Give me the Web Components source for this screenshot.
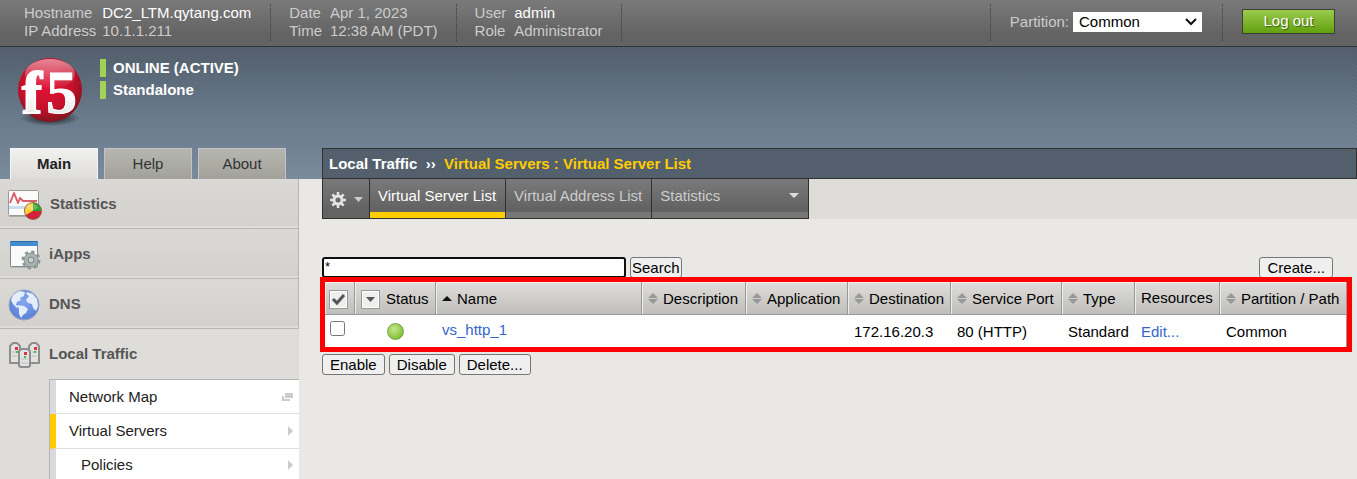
<!DOCTYPE html>
<html lang="en">
<head>
<meta charset="utf-8">
<meta name="viewport" content="width=device-width, initial-scale=1">
<title>BIG-IP - Virtual Server List</title>
<style>
  html, body { margin: 0; height: 100%; }
  body {
    font: 15px/18px "Liberation Sans", Arial, sans-serif;
    color: #000;
    background: #e9e8e5;
    --dark: #303030;
    --yellow: #fc0;
    --stripes: linear-gradient(135deg, rgba(0,0,0,.05) 25%, transparent 25% 50%, rgba(0,0,0,.05) 50% 75%, transparent 75%) 0 0 / 4px 4px;
    --bar: linear-gradient(#7a7a7a, #636363 75%);
  }
</style>
</head>
<body>
<bigip-app></bigip-app>
<script>
const define = (name, html, setup) => {
  const template = document.createElement('template');
  template.innerHTML = html;
  customElements.define(name, class extends HTMLElement {
    constructor() {
      super();
      this.attachShadow({ mode: 'open' }).append(template.content.cloneNode(true));
    }
    connectedCallback() { if (setup) setup(this, this.shadowRoot); }
  });
};

/* Push button used across forms */
define('form-button', `
  <style>
    :host { display: block; }
    button {
      display: block; box-sizing: border-box; height: 21px; margin: 0;
      padding: 0 var(--pad, 7px); font: inherit; line-height: 18px; color: #000;
      background: #efefef; border: 1px solid #767676; border-radius: 3px; white-space: nowrap;
    }
  </style>
  <button type="button"><slot></slot></button>`);

/* Label/value block in the top bar */
define('info-group', `
  <style>
    :host {
      display: grid; grid-template-columns: auto auto; column-gap: 8px; align-content: start;
      padding: 0 18px; border-right: 1px dotted #3c3c3c; color: #ccc; white-space: nowrap;
    }
    :host([first]) { padding: 0 19px 0 24px; column-gap: 6px; }
    ::slotted(b) { font-weight: normal; color: #fff; }
  </style>
  <slot></slot>`);

define('top-bar', `
  <style>
    :host {
      display: flex; justify-content: space-between; flex: none; padding: 4px 22px 5px 0;
      height: 37px; border-bottom: 1px solid #333; background: var(--bar);
    }
    .side { display: flex; }
    .partition, .out { display: flex; align-items: center; padding-bottom: 2px; }
    .partition { color: #ccc; padding: 0 20px 2px 19px; gap: 4px; border: 1px dotted #3c3c3c; border-width: 0 1px; }
    .out { padding-left: 19px; }
    select {
      appearance: none; box-sizing: border-box; width: 129px; height: 20px; margin: 0;
      padding: 0 6px; border: 0; border-radius: 0; color: #000; font: inherit;
      background: #fff url("data:image/svg+xml,%3Csvg xmlns='http://www.w3.org/2000/svg' width='12' height='8'%3E%3Cpath d='M1 1l5 5 5-5' fill='none' stroke='%23111' stroke-width='2'/%3E%3C/svg%3E") no-repeat right 5px center;
    }
    button {
      box-sizing: border-box; width: 93px; height: 25px; margin: 0; padding: 0 0 2px; font: inherit; color: #fff;
      text-shadow: 1px 1px 1px #3b5d10; border: 1px solid #3b3f36;
      background: linear-gradient(#9ccb4c, #62a010);
    }
  </style>
  <div class="side">
    <info-group first><span>Hostname</span><b>DC2_LTM.qytang.com</b><span>IP Address</span><span>10.1.1.211</span></info-group>
    <info-group><span>Date</span><span>Apr 1, 2023</span><span>Time</span><span>12:38 AM (PDT)</span></info-group>
    <info-group><span>User</span><b>admin</b><span>Role</span><span>Administrator</span></info-group>
  </div>
  <div class="side">
    <div class="partition">
      <label for="partition">Partition:</label>
      <select id="partition"><option>Common</option></select>
    </div>
    <div class="out"><button type="button">Log out</button></div>
  </div>`);

define('f5-logo', `
  <style>:host { display: block; } svg { display: block; overflow: visible; }</style>
  <svg width="72" height="72" viewBox="0 0 72 72" role="img" aria-label="f5">
    <defs>
      <radialGradient id="ball" cx="45%" cy="38%" r="62%">
        <stop offset="0" stop-color="#e3143a"/><stop offset=".65" stop-color="#c8102b"/><stop offset="1" stop-color="#84141f"/>
      </radialGradient>
      <linearGradient id="shine" x2="0" y2="1">
        <stop offset="0" stop-color="#fff" stop-opacity=".5"/><stop offset="1" stop-color="#fff" stop-opacity="0"/>
      </linearGradient>
      <linearGradient id="ink" x2="0" y2="1"><stop offset=".5" stop-color="#fff"/><stop offset="1" stop-color="#dcdcdc"/></linearGradient>
      <radialGradient id="shade"><stop offset=".4" stop-color="#222" stop-opacity=".7"/><stop offset="1" stop-color="#222" stop-opacity="0"/></radialGradient>
    </defs>
    <ellipse cx="36" cy="62" rx="30" ry="8" fill="url(#shade)"/>
    <circle cx="36" cy="34" r="32" fill="url(#ball)"/>
    <ellipse cx="36" cy="18" rx="25" ry="15" fill="url(#shine)"/>
    <g font-family="Liberation Serif, serif" font-weight="bold" fill="url(#ink)" stroke="#fff">
      <text x="8" y="57" font-size="60" stroke-width="2">f</text>
      <text x="32" y="57" font-size="62" stroke-width="1">5</text>
    </g>
  </svg>`);

define('device-status', `
  <style>
    :host { display: grid; gap: 4px; font-weight: bold; color: #fff; }
    ::slotted(span) { padding-left: 7px; border-left: 6px solid #a2d158; }
  </style>
  <slot></slot>`);

define('section-tab', `
  <style>
    :host { display: block; flex: none; }
    a {
      display: block; box-sizing: border-box; width: 88px; height: 31px; line-height: 30px; text-align: center;
      color: #333; text-decoration: none; background: linear-gradient(#b6b6b0, #a2a29b);
      border: 1px solid #c3c4bf; border-bottom: 0;
    }
    :host([active]) a { font-weight: bold; color: #222; background: linear-gradient(#f1f1ef, #dddcd8); border-color: #f5f5f3; }
  </style>
  <a href="#"><slot></slot></a>`);

define('page-banner', `
  <style>
    :host {
      display: block; flex: none;
      background: var(--stripes), linear-gradient(#54616e, #6b7c8e 50%, #7c8ea2);
    }
    .brand { display: flex; gap: 14px; height: 89px; padding: 12px 14px 0; }
    f5-logo { margin-top: -3px; }
    device-status { align-self: start; }
    .row { display: grid; grid-template-columns: 322px 1fr; }
    .tabs { display: flex; gap: 6px; padding-left: 10px; }
    nav.crumbs {
      box-sizing: border-box; height: 31px; padding-left: 6px; line-height: 30px; font-weight: bold;
      color: #fff; white-space: pre; border: 1px solid var(--dark);
      background: var(--stripes), #55626f;
    }
    nav.crumbs b { color: var(--yellow); }
  </style>
  <div class="brand">
    <f5-logo></f5-logo>
    <device-status><span>ONLINE (ACTIVE)</span><span>Standalone</span></device-status>
  </div>
  <div class="row">
    <nav class="tabs"><section-tab active>Main</section-tab><section-tab>Help</section-tab><section-tab>About</section-tab></nav>
    <nav class="crumbs">Local Traffic&nbsp; ››&nbsp; <b>Virtual Servers : Virtual Server List</b></nav>
  </div>`);

define('nav-section', `
  <style>
    :host { display: block; }
    a {
      display: flex; align-items: center; gap: 7px; box-sizing: border-box; height: 50px; padding-left: 7px;
      color: #555; font-weight: bold; text-decoration: none;
      background: linear-gradient(#dad9d6, #d2d1cd); border: solid #b7b7b7; border-width: 0 1px 1px 0;
      box-shadow: inset 0 -2px #deddda;
    }
    :host([open]) a { background: none; border-color: transparent; box-shadow: none; }
    ::slotted(svg) { display: block; flex: none; }
  </style>
  <a href="#"><slot name="icon"></slot><slot></slot></a>`);

define('nav-item', `
  <style>
    :host { display: block; }
    a {
      display: flex; align-items: center; justify-content: space-between; box-sizing: border-box; height: 34px;
      padding: 0 6px 0 13px; color: #222; text-decoration: none; background: #fff;
      border-left: 6px solid #dad9dd; border-bottom: 1px solid #ddd;
    }
    :host([active]) a { border-left-color: var(--yellow); }
    :host([tall]) a { height: 35px; }
    :host([nested]) a { padding-left: 25px; height: 32px; }
    svg { display: none; fill: #ccc; }
    :host(:not([external])) .arrow, :host([external]) .window { display: block; }
  </style>
  <a href="#"><slot></slot>
    <svg class="arrow" width="6" height="10"><path d="M1 0l5 5-5 5z"/></svg>
    <svg class="window" width="11" height="8"><path d="M3 0h8v5H3zM0 3h2v3h6v2H0z"/></svg>
  </a>`);

define('side-nav', `
  <style>
    :host { display: block; background: #deddda; }
    .sub { margin-left: 49px; border: solid #b5b5b5; border-width: 1px 0 0 1px; }
  </style>
  <nav>
    <nav-section>
      <svg slot="icon" width="36" height="36" viewBox="0 0 36 36">
        <path d="M2 30h20" stroke="#aaa" stroke-width="2"/>
        <rect x="1.500" y="4.500" width="30" height="25" rx="1" fill="#fbfbfb" stroke="#999"/>
        <path d="M2 20h29v3H2z" fill="#c9e0f2"/>
        <path d="M3 17l4-10 4 10 2-5 3 3h14" fill="none" stroke="#d8606a" stroke-width="2" stroke-linejoin="round"/>
        <circle cx="26" cy="25" r="9" fill="#8a6a4a"/>
        <path d="M26 25V17a8 8 0 0 0-7 12z" fill="#fc3"/><path d="M26 25V17a8 8 0 0 1 8 8z" fill="#2ba32b"/>
        <path d="M26 25h8a8 8 0 0 1-15 4z" fill="#d42238"/>
        <ellipse cx="25" cy="21" rx="6" ry="3" fill="#fff" opacity=".25"/>
      </svg>Statistics</nav-section>
    <nav-section>
      <svg slot="icon" width="35" height="36" viewBox="0 0 35 36">
        <rect x="3" y="6" width="28" height="26" rx="1" fill="#bbb"/>
        <rect x="3.500" y="5.500" width="27" height="25" rx="1" fill="#fafafa" stroke="#808890"/>
        <path d="M3 5h28v5H3z" fill="#438ccd"/><path d="M4 5h26v1H4z" fill="#2c6ca8"/>
        <circle cx="24" cy="24" r="8" fill="none" stroke="#8a9593" stroke-width="3" stroke-dasharray="3.140 3.140"/>
        <circle cx="24" cy="24" r="7" fill="#aab4b2" stroke="#8a9593"/>
        <circle cx="24" cy="24" r="3" fill="#c9cfcd" stroke="#788180"/>
      </svg>iApps</nav-section>
    <nav-section>
      <svg slot="icon" width="35" height="36" viewBox="0 0 35 36">
        <defs><radialGradient id="sea" cy="40%"><stop offset="0" stop-color="#86a8f0"/><stop offset="1" stop-color="#5f86d8"/></radialGradient></defs>
        <circle cx="17" cy="19" r="15" fill="url(#sea)" stroke="#95a2be"/>
        <path d="M6 9l6-4 6 1-1 4-4 2 1 2-4 2-1 3 3 1-2 2-4-4-2-4zM11 19l6 1 4 3-2 4-3 2-2 3-2-4v-4zM20 6l6 2 4 5 1 7-2 5-3-3-1-4-4-1-2-3 3-4-3-2z" fill="#e3edfc"/>
      </svg>DNS</nav-section>
    <nav-section open>
      <svg slot="icon" width="35" height="36" viewBox="0 0 35 36">
        <g fill="#e2e2e2" stroke="#8d8d8d" stroke-width="2" stroke-linejoin="round">
          <path d="M3 27V10l3-3h4l3 3v17zM22 27V10l3-3h4l3 3v17z"/><path d="M12 30V15l3-2h5l3 2v15l-2 1h-7z"/>
        </g>
        <path d="M5 16h5M5 20h5M25 16h5M25 20h5M14 23h7M14 27h7" stroke="#bbb"/>
        <path d="M8 11h3v3H8zM27 11h3v3h-3zM17 16h3v3h-3z" fill="#e0353d"/><path d="M9 15h2v2H9zM27 15h2v2h-2zM17 20h2v2h-2z" fill="#46b850"/>
      </svg>Local Traffic</nav-section>
    <div class="sub">
      <nav-item external>Network Map</nav-item>
      <nav-item active tall>Virtual Servers</nav-item>
      <nav-item nested>Policies</nav-item>
    </div>
  </nav>`);

define('tab-strip', `
  <style>
    :host { display: flex; margin-left: 23px; background: #deddda; }
    nav { display: flex; border: solid var(--dark); border-width: 0 0 1px 1px; background: var(--bar); }
    nav > * {
      display: flex; box-sizing: border-box; height: 39px; padding: 0 9px 0 8px; margin: 0; border: 0;
      border-right: 1px solid var(--dark); background: none;
      color: #ccc; text-decoration: none; white-space: nowrap; line-height: 34px;
      box-shadow: inset 0 -6px #777;
    }
    nav > .on { color: #fff; box-shadow: inset 0 -6px var(--yellow); }
    button { align-items: center; gap: 8px; }
    nav > button { width: 47px; padding: 2px 0 0 7px; box-shadow: none; }
    nav > .menu { width: 157px; justify-content: space-between; }
    .menu svg { margin-top: 14px; }
    svg { display: block; flex: none; }
  </style>
  <nav>
    <button type="button" aria-label="Options">
      <svg width="16" height="16" viewBox="0 0 16 16"><g fill="none" stroke="#e2e2e2"><circle cx="8" cy="8" r="4" stroke-width="3"/><path d="M8 0v3M8 13v3M0 8h3M13 8h3M2.300 2.300l2.200 2.200M11.500 11.500l2.200 2.200M2.300 13.700l2.200-2.200M11.500 4.500l2.200-2.200" stroke-width="2.500"/></g></svg>
      <svg width="9" height="5"><path d="M0 0h9l-4.500 5z" fill="#ccc"/></svg>
    </button>
    <a href="#" class="on">Virtual Server List</a>
    <a href="#">Virtual Address List</a>
    <a href="#" class="menu">Statistics<svg width="10" height="5"><path d="M0 0h10l-5 5z" fill="#ddd"/></svg></a>
  </nav>`);

define('sort-label', `
  <style>
    :host { display: flex; align-items: center; gap: 5px; white-space: nowrap; }
    svg { display: none; flex: none; margin-top: -2px; }
    :host(:not([sorted])) .both, :host([sorted]) .up { display: block; }
  </style>
  <svg class="both" width="10" height="11"><path d="M0 5l5-5 5 5zM0 6h10l-5 5z" fill="#999"/></svg>
  <svg class="up" width="10" height="11"><path d="M0 8l5-5 5 5z" fill="#111"/></svg>
  <slot></slot>`);

define('server-table', `
  <style>
    :host { display: block; position: relative; border: 5px solid #f00; background: #fff; }
    table { width: 100%; table-layout: fixed; border-collapse: separate; border-spacing: 0; }
    th, td { box-sizing: border-box; padding: 2px 0 0 6px; text-align: left; font-weight: normal; white-space: nowrap; }
    th {
      height: 33px; border: solid #999; border-width: 0 1px 1px 0;
      background: linear-gradient(#dfdedb, #bfbebb); box-shadow: inset 1px 1px #eee;
    }
    th.plain { padding-top: 0; }
    td { height: 32px; padding-left: 6px; }
    td:last-child { border-right: 1px solid #999; }
    th:first-child { padding-left: 4px; }
    td:first-child { padding-left: 5px; }
    .status { display: flex; align-items: center; gap: 6px; }
    a { color: #36c; text-decoration: none; }
    td.name { padding: 0 0 2px 6px; }
    input { display: block; width: 15px; height: 15px; margin: 0 0 7px; }
    th button { display: block; box-sizing: border-box; width: 19px; height: 19px; margin: 0; padding: 0; border: 1px solid #999; background: #eee; box-shadow: inset 0 0 0 1px #fff; }
    th svg { display: block; margin: auto; }
    td.light { padding: 0; }
    .dot { box-sizing: border-box; width: 17px; height: 17px; margin: auto; border: 1px solid #7b9f56; border-radius: 50%; background: radial-gradient(circle at 40% 35%, #c3e88e, #82c02f 75%); }
    .c1 { width: 30px } .c2 { width: 81px } .c4 { width: 104px } .c5 { width: 102px } .c6 { width: 103px }
    .c7 { width: 111px } .c8 { width: 73px } .c9 { width: 85px } .c10 { width: 127px }
  </style>
  <table>
    <colgroup><col class="c1"><col class="c2"><col class="c3"><col class="c4"><col class="c5"><col class="c6"><col class="c7"><col class="c8"><col class="c9"><col class="c10"></colgroup>
    <thead><tr>
      <th><button type="button" aria-label="Select all"><svg width="15" height="13"><path d="M2 6l4 4 7-8" fill="none" stroke="#555" stroke-width="3"/></svg></button></th>
      <th><div class="status"><button type="button" aria-label="Filter status"><svg width="9" height="5"><path d="M0 0h9l-4.500 5z" fill="#555"/></svg></button>Status</div></th>
      <th><sort-label sorted>Name</sort-label></th>
      <th><sort-label>Description</sort-label></th>
      <th><sort-label>Application</sort-label></th>
      <th><sort-label>Destination</sort-label></th>
      <th><sort-label>Service Port</sort-label></th>
      <th><sort-label>Type</sort-label></th>
      <th class="plain">Resources</th>
      <th><sort-label>Partition / Path</sort-label></th>
    </tr></thead>
    <tbody><tr>
      <td><input type="checkbox" aria-label="Select vs_http_1"></td>
      <td class="light"><div class="dot" role="img" aria-label="Available"></div></td>
      <td class="name"><a href="#">vs_http_1</a></td>
      <td></td><td></td>
      <td>172.16.20.3</td><td>80 (HTTP)</td><td>Standard</td><td><a href="#">Edit...</a></td><td>Common</td>
    </tr></tbody>
  </table>`);

define('server-list', `
  <style>
    :host { display: block; padding: 38px 5px 0 21px; }
    .tools { display: flex; align-items: flex-start; gap: 4px; height: 20px; padding: 0 19px 0 2px; }
    input {
      box-sizing: border-box; width: 304px; height: 21px; margin: 0; padding: 0 1px 2px; outline: none;
      border: 2px solid #101010; border-radius: 3px; background: #fff; color: #000; font: inherit; font-size: 13px;
    }
    .search { --pad: 1px; }
    .create { margin-left: auto; }
    .actions { display: flex; gap: 4px; padding: 2px 0 0 2px; }
  </style>
  <div class="tools">
    <input type="text" value="*" aria-label="Search">
    <form-button class="search">Search</form-button>
    <form-button class="create">Create...</form-button>
  </div>
  <server-table></server-table>
  <div class="actions">
    <form-button>Enable</form-button><form-button>Disable</form-button><form-button>Delete...</form-button>
  </div>`);

define('bigip-app', `
  <style>
    :host { display: flex; flex-direction: column; height: 100vh; overflow: hidden; }
    .body { flex: 1; min-height: 0; display: grid; grid-template-columns: 299px 1fr; overflow: hidden; }
    main { min-width: 0; }
  </style>
  <top-bar></top-bar>
  <page-banner></page-banner>
  <div class="body">
    <side-nav></side-nav>
    <main><tab-strip></tab-strip><server-list></server-list></main>
  </div>`);
</script>
</body>
</html>
